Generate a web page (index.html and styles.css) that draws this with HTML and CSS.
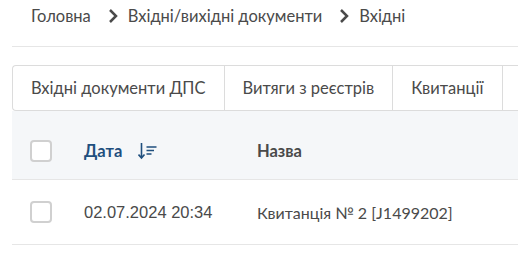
FILE: index.html
```html
<!DOCTYPE html>
<html lang="uk">
<head>
<meta charset="utf-8">
<link rel="stylesheet" href="styles.css">
</head>
<body>
<div class="page">
  <nav class="crumbs">
    <span class="crumb">Головна</span>
    <svg class="chev" viewBox="0 0 10 14" width="10" height="14"><path d="M2 1 L8 7 L2 13" fill="none" stroke="#4a4a4a" stroke-width="2.5"/></svg>
    <span class="crumb">Вхідні/вихідні документи</span>
    <svg class="chev" viewBox="0 0 10 14" width="10" height="14"><path d="M2 1 L8 7 L2 13" fill="none" stroke="#4a4a4a" stroke-width="2.5"/></svg>
    <span class="crumb">Вхідні</span>
  </nav>
  <div class="tabs">
    <div class="tab">Вхідні документи ДПС</div>
    <div class="tab">Витяги з реєстрів</div>
    <div class="tab">Квитанції</div>
    <div class="tab tab-rest"></div>
  </div>
  <div class="table">
    <div class="row head">
      <div class="cell chk"><span class="box"></span></div>
      <div class="cell date">
        <span class="h-date">Дата</span>
        <svg class="sort" viewBox="0 0 20 18" width="20" height="18"><path d="M3.5 1 V16 M0.5 12.5 L3.5 16 L6.5 12.5" fill="none" stroke="#1f4f7e" stroke-width="1.6"/><path d="M8.5 5 H18.5 M8.5 8.5 H16 M8.5 12 H13.5" fill="none" stroke="#1f4f7e" stroke-width="1.4"/></svg>
      </div>
      <div class="cell name h-name">Назва</div>
    </div>
    <div class="row body">
      <div class="cell chk"><span class="box"></span></div>
      <div class="cell date num">02.07.2024 20:34</div>
      <div class="cell name">Квитанція № 2 [J1499202]</div>
    </div>
  </div>
</div>
</body>
</html>
```

FILE: styles.css
```css
html, body {
  margin: 0;
  padding: 0;
  background: #ffffff;
  overflow: hidden;
}
body {
  font-family: Lato, "Noto Sans", sans-serif;
  color: #4a4a4a;
  font-size: 16.5px;
}
.page {
  padding-left: 12px;
  width: 506px;
  overflow: hidden;
}
.crumbs {
  display: flex;
  align-items: center;
  padding-left: 19px;
  border-bottom: 1px solid #e6e6e6;
  box-sizing: border-box;
  height: 47px;
  padding-bottom: 15px;
}
.crumb {
  color: #4a4a4a;
}
.chev {
  margin: 0 10px 0 17px;
}
.tabs {
  display: flex;
  margin-top: 18px;
  height: 46px;
  border: 1px solid #dcdcdc;
  border-right: none;
  border-radius: 4px 0 0 4px;
  box-sizing: border-box;
  width: 520px;
}
.tab {
  display: flex;
  align-items: center;
  padding: 0 18px;
  border-right: 1px solid #dcdcdc;
  color: #4a4a4a;
  white-space: nowrap;
}
.tab-rest {
  flex: 1;
  border-right: none;
}
.row {
  display: flex;
  align-items: center;
  border-bottom: 1px solid #e6e6e6;
  box-sizing: border-box;
}
.head {
  height: 69px;
  padding-top: 12px;
  background: #f5f7f9;
}
.body {
  height: 65px;
}
.chk {
  width: 72px;
  padding-left: 18px;
  box-sizing: border-box;
  display: flex;
  align-items: center;
}
.box {
  width: 22px;
  height: 22px;
  box-sizing: border-box;
  border: 2px solid #d0d0d0;
  border-radius: 4px;
  background: #fff;
}
.date {
  width: 173px;
  display: flex;
  align-items: center;
  gap: 16px;
}
.h-date {
  font-weight: 700;
  color: #1f4f7e;
}
.h-name {
  font-weight: 700;
  color: #4a4a4a;
}
.num {
  font-family: "Liberation Sans", Arial, sans-serif;
  font-size: 16.5px;
}
.body .name {
  font-size: 16px;
}
```
